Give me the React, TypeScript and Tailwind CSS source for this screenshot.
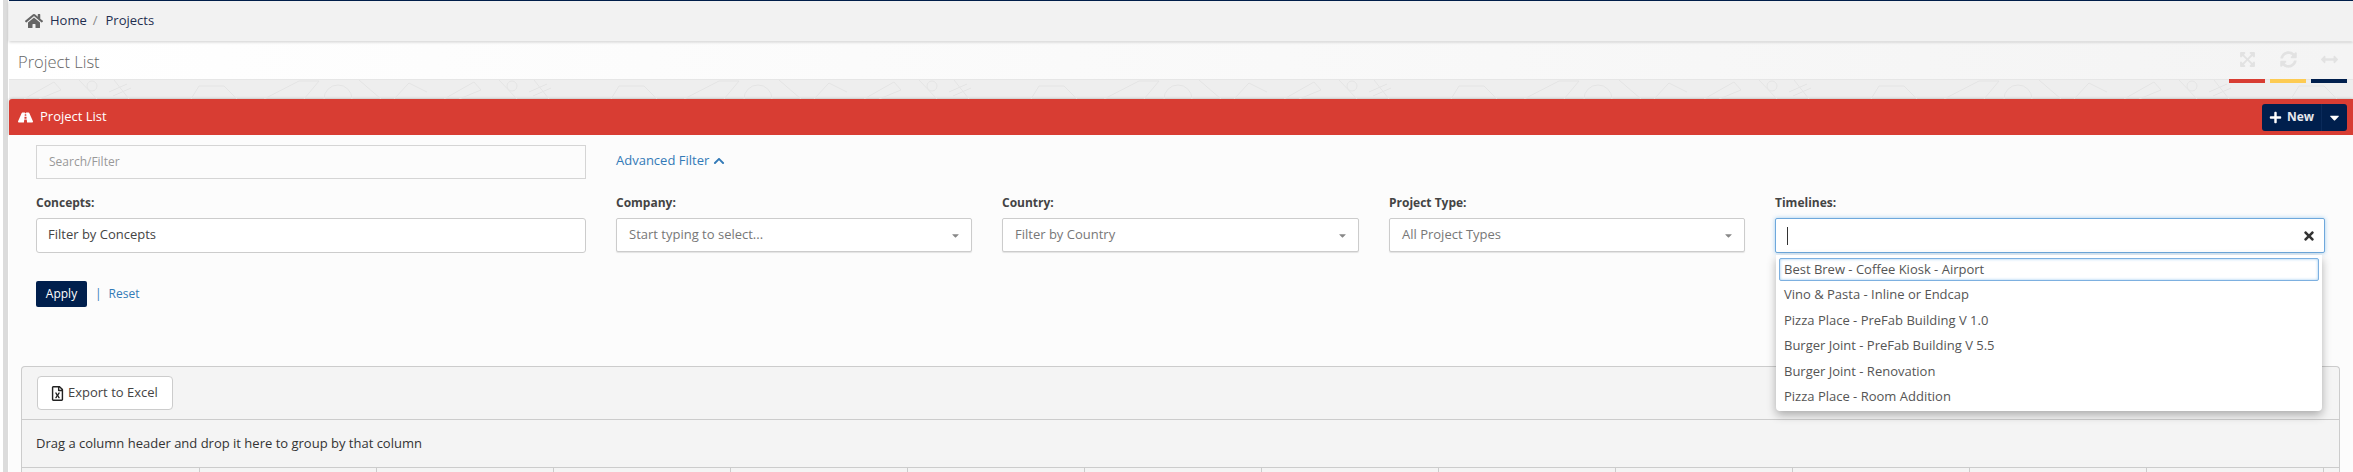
import { FaHome, FaRoad, FaPlus, FaCaretDown, FaExpandArrowsAlt, FaSyncAlt, FaArrowsAltH, FaChevronUp, FaTimes, FaRegFileExcel } from "react-icons/fa";

const timelines = [
  "Best Brew - Coffee Kiosk - Airport",
  "Vino & Pasta - Inline or Endcap",
  "Pizza Place - PreFab Building V 1.0",
  "Burger Joint - PreFab Building V 5.5",
  "Burger Joint - Renovation",
  "Pizza Place - Room Addition",
];

const columns = Array.from({ length: 13 }, (_, i) => i);

function SelectBox({ label, placeholder }: { label: string; placeholder: string }) {
  return (
    <div>
      <label className="block h-[20px] text-[12px] leading-[20px] font-bold text-[#444]">{label}</label>
      <div className="mt-[5px] flex h-[34px] items-center justify-between rounded-[2px] border border-[#ccc] bg-white pr-[10px] pl-[12px] shadow-[0_1px_1px_rgba(0,0,0,0.1)]">
        <span className="text-[13px] text-[#777]">{placeholder}</span>
        <FaCaretDown className="text-[11px] text-[#888]" />
      </div>
    </div>
  );
}

function PatternBand() {
  return (
    <svg className="block h-[19px] w-full bg-[#eeeeee]" aria-hidden="true">
      <defs>
        <pattern id="doodles" width="420" height="19" patternUnits="userSpaceOnUse">
          <g fill="none" stroke="#e4e4e4" strokeWidth="1">
            <path d="M15 19 L45 2 L52 10 L30 19" />
            <path d="M70 0 L88 19 M105 0 L120 19 M78 6 a5 5 0 1 0 10 0 a5 5 0 1 0 -10 0" />
            <path d="M100 12 L118 4 M104 16 L122 8" />
            <path d="M182 19 L190 6 L215 6 L228 19" />
            <path d="M255 19 L290 1 L310 1 L295 19" />
            <path d="M315 19 a14 14 0 0 1 28 0 M350 0 L372 19" />
            <path d="M385 19 L400 3 L418 12" />
          </g>
        </pattern>
      </defs>
      <rect width="100%" height="19" fill="url(#doodles)" />
    </svg>
  );
}

export default function App() {
  return (
    <div className="flex h-[472px] w-full overflow-hidden bg-white font-['Open_Sans',sans-serif] text-[12px] text-[#333]">
      <div className="ml-[3px] w-[5px] shrink-0 bg-[#dcdcdc]" />
      <div className="ml-px min-w-0 flex-1">
        <div className="h-px bg-[#001f4d]" />

        {/* Breadcrumb */}
        <div className="relative z-10 flex h-[40px] items-center bg-[#f2f2f2] pl-[16px] text-[13px] shadow-[0_1px_3px_rgba(0,0,0,0.2)]">
          <FaHome className="text-[18px] text-[#666]" />
          <span className="ml-[7px] text-[#1f2f50]">Home</span>
          <span className="ml-[6px] text-[#888]">/</span>
          <span className="ml-[8px] text-[#1f2f50]">Projects</span>
        </div>

        {/* Page title */}
        <div className="mt-px flex h-[38px] items-center justify-between border-b border-[#e6e6e6] bg-gradient-to-r from-white to-[#f4f4f4] pl-[9px]">
          <h1 className="pt-[4px] text-[16.5px] font-light text-[#666]">Project List</h1>
          <div className="mr-[6px] -mb-[4px] flex h-[42px] gap-[5px] self-end">
            <div className="flex w-[36px] items-center justify-center border-b-4 border-[#d83d33] pb-[1px] text-[17px] text-[#e2e2e2]">
              <FaExpandArrowsAlt />
            </div>
            <div className="flex w-[36px] items-center justify-center border-b-4 border-[#fdcb52] pb-[1px] text-[17px] text-[#e2e2e2]">
              <FaSyncAlt />
            </div>
            <div className="flex w-[36px] items-center justify-center border-b-4 border-[#001f4d] pb-[1px] text-[17px] text-[#e2e2e2]">
              <FaArrowsAltH />
            </div>
          </div>
        </div>

        <PatternBand />

        {/* Panel */}
        <div className="flex h-[36px] items-center justify-between rounded-tl-[3px] bg-[#d83d33] pr-[6px] pl-[9px] text-white shadow-[0_0_3px_rgba(0,0,0,0.3)]">
          <div className="flex items-center text-[13px] font-medium">
            <FaRoad className="text-[15px]" />
            <span className="ml-[7px]">Project List</span>
          </div>
          <div className="flex h-[27px] w-[85px] rounded-[3px] bg-[#001f4d] font-bold text-[#e6e8ee]">
            <div className="flex w-[60px] items-center justify-center gap-[5px] border-r border-[#0a2a5a]">
              <FaPlus className="text-[13px] text-white" />
              <span>New</span>
            </div>
            <div className="flex flex-1 items-center justify-center">
              <FaCaretDown className="text-[15px] text-white" />
            </div>
          </div>
        </div>

        <div className="bg-[#fcfcfc]">
          <div className="grid grid-cols-[550px_356px_357px_356px_550px] gap-x-[30px] pt-[10px] pl-[27px]">
            <div className="flex h-[34px] items-center border border-[#d5d5d5] bg-[#fcfcfc] pl-[12px] text-[#999]">
              Search/Filter
            </div>
            <div className="col-span-4 flex h-[32px] items-center gap-[4px] text-[13px] text-[#337ab7]">
              <span>Advanced Filter</span>
              <FaChevronUp className="text-[12px]" />
            </div>
          </div>

          <div className="mt-[14px] grid grid-cols-[550px_356px_357px_356px_550px] gap-x-[30px] pl-[27px]">
            <div>
              <label className="block h-[20px] leading-[20px] font-bold text-[#444]">Concepts:</label>
              <div className="mt-[5px] flex h-[35px] items-center rounded-[3px] border border-[#ccc] bg-white pb-px pl-[11px] text-[13px] text-[#444]">
                Filter by Concepts
              </div>
            </div>
            <SelectBox label="Company:" placeholder="Start typing to select..." />
            <SelectBox label="Country:" placeholder="Filter by Country" />
            <SelectBox label="Project Type:" placeholder="All Project Types" />
            <div className="relative">
              <label className="block h-[20px] leading-[20px] font-bold text-[#444]">Timelines:</label>
              <div className="mt-[5px] flex h-[35px] items-center justify-between rounded-[2px] border border-[#6ea8dc] bg-white pr-[8px] pl-[11px] shadow-[0_0_4px_rgba(102,175,233,0.6)]">
                <div className="h-[18px] w-px bg-[#333]" />
                <FaTimes className="text-[14px] text-[#333]" />
              </div>
              <div className="absolute top-[62px] left-px z-20 h-[156px] w-[546px] rounded-b-[4px] bg-white pt-[2px] text-[13px] text-[#555] shadow-[0_4px_10px_rgba(0,0,0,0.3)]">
                {timelines.map((name, i) => (
                  <div key={name} className="flex h-[25.4px] items-center">
                    {i === 0 ? (
                      <div className="mx-[3px] flex h-[23px] w-full items-center rounded-[2px] border border-[#7db0e0] pl-[4px] shadow-[inset_0_0_3px_rgba(102,175,233,0.7)]">
                        {name}
                      </div>
                    ) : (
                      <span className="pl-[8px]">{name}</span>
                    )}
                  </div>
                ))}
              </div>
            </div>
          </div>

          <div className="mt-[28px] flex h-[26px] items-center pl-[27px]">
            <button className="h-[26px] w-[51px] rounded-[2px] bg-[#001f4d] text-white">Apply</button>
            <span className="ml-[8px] text-[#337ab7]">|</span>
            <a className="ml-[7px] text-[#337ab7]">Reset</a>
          </div>

          <div className="h-[59px]" />
        </div>

        {/* Grid */}
        <div className="bg-[#fcfcfc] pr-[13px] pl-[12px]">
          <div className="rounded-t-[4px] border border-b-0 border-[#ccc] bg-[#f4f4f4]">
            <div className="flex h-[53px] items-center border-b border-[#ccc] pl-[15px]">
              <button className="flex h-[34px] w-[136px] items-center gap-[3px] rounded-[4px] border border-[#ccc] bg-white pl-[12px] text-[13px] text-[#444]">
                <FaRegFileExcel className="text-[15px] text-[#222]" />
                Export to Excel
              </button>
            </div>
            <div className="flex h-[48px] items-center border-b border-[#ccc] pl-[14px] text-[13px] text-[#333]">
              Drag a column header and drop it here to group by that column
            </div>
            <div className="flex h-[20px]">
              {columns.map((c) => (
                <div key={c} className={c === 0 ? "w-[178px] border-r border-[#ccc]" : "w-[177px] border-r border-[#ccc]"} />
              ))}
            </div>
          </div>
        </div>
      </div>
    </div>
  );
}
